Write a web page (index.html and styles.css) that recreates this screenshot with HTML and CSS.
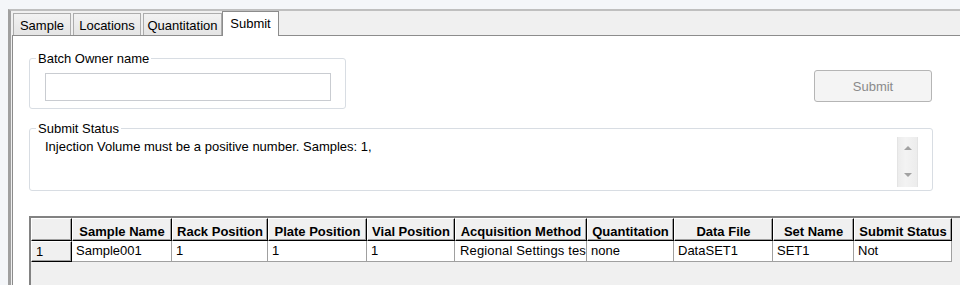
FILE: index.html
```html
<!DOCTYPE html>
<html lang="en">
<head>
    <meta charset="UTF-8">
    <title>Batch Submit</title>
    <link rel="stylesheet" href="styles.css">
</head>
<body>
    <div class="frame">
        <div class="tabs">
            <div class="tab tab-sample">Sample</div>
            <div class="tab tab-locations">Locations</div>
            <div class="tab tab-quant">Quantitation</div>
            <div class="tab tab-submit active">Submit</div>
        </div>

        <div class="panel">
            <div class="top-row">
                <fieldset class="group owner">
                    <legend>Batch Owner name</legend>
                    <input type="text" class="owner-input">
                </fieldset>
                <button class="submit-btn" disabled>Submit</button>
            </div>

            <fieldset class="group status">
                <legend>Submit Status</legend>
                <div class="status-body">
                    <div class="status-text">Injection Volume must be a positive number. Samples: 1,</div>
                    <div class="scrollbar">
                        <span class="arrow up"></span>
                        <span class="arrow down"></span>
                    </div>
                </div>
            </fieldset>

            <div class="grid-wrap">
                <div class="grid">
                    <div class="hcell"></div>
                    <div class="hcell">Sample Name</div>
                    <div class="hcell">Rack Position</div>
                    <div class="hcell">Plate Position</div>
                    <div class="hcell">Vial Position</div>
                    <div class="hcell">Acquisition Method</div>
                    <div class="hcell">Quantitation</div>
                    <div class="hcell">Data File</div>
                    <div class="hcell">Set Name</div>
                    <div class="hcell">Submit Status</div>

                    <div class="rowhead">1</div>
                    <div class="cell">Sample001</div>
                    <div class="cell">1</div>
                    <div class="cell">1</div>
                    <div class="cell">1</div>
                    <div class="cell cell-method">Regional Settings test</div>
                    <div class="cell">none</div>
                    <div class="cell">DataSET1</div>
                    <div class="cell">SET1</div>
                    <div class="cell">Not</div>
                </div>
            </div>
        </div>
    </div>
</body>
</html>
```

FILE: styles.css
```css
* {
    box-sizing: border-box;
    margin: 0;
    padding: 0;
}

body {
    font-family: "Liberation Sans", Arial, sans-serif;
    font-size: 13px;
    line-height: 15px;
    color: #000;
    background-color: #f4f6f9;
    height: 285px;
    overflow: hidden;
}

.frame {
    display: flex;
    flex-direction: column;
    margin: 9px 0 0 8px;
    height: 276px;
    background-color: #f0f0f0;
    border-top: 2px solid #bfbfbf;
    border-left: 3px solid #a0a0a0;
}

/* Tab strip */
.tabs {
    display: flex;
    align-items: flex-end;
    height: 24px;
    padding-left: 2px;
}

.tab {
    height: 22px;
    margin-right: 2px;
    padding-top: 4px;
    text-align: center;
    white-space: nowrap;
    background: linear-gradient(#f2f2f2, #e4e4e4);
    border: 1px solid #acacac;
    border-bottom: none;
}

.tab-sample { width: 58px; }
.tab-locations { width: 68px; }
.tab-quant { width: 79px; }
.tab-submit { width: 57px; }

.tab.active {
    position: relative;
    z-index: 1;
    height: 25px;
    margin-left: -2px;
    margin-bottom: -1px;
    background: #fff;
    border-color: #8c8c8c;
}

/* Page of the active tab */
.panel {
    flex: 1;
    margin-left: 1px;
    padding: 15px 0 0 16px;
    background-color: #fff;
    border-top: 1px solid #8c8c8c;
    border-left: 1px solid #8c8c8c;
    overflow: hidden;
}

.top-row {
    display: flex;
    justify-content: space-between;
    width: 904px;
}

.group {
    border: 1px solid #d8dde3;
    border-radius: 3px;
    min-width: 0;
}

.group legend {
    margin-left: -9px;
    padding: 0 2px;
}

.owner {
    width: 317px;
    padding: 7px 13px 7px 15px;
}

.owner-input {
    display: block;
    width: 286px;
    height: 28px;
    border: 1px solid #c9ccd1;
    background: #fff;
}

.submit-btn {
    width: 118px;
    height: 32px;
    margin: 19px 1px 0 0;
    font-family: inherit;
    font-size: 13px;
    color: #8a8a8a;
    background-color: #f4f4f4;
    border: 1px solid #b5b5b5;
    border-radius: 3px;
}

.status {
    width: 904px;
    margin-top: 12px;
    padding: 1px 14px 3px 15px;
}

.status-body {
    display: flex;
    justify-content: space-between;
}

.status-text {
    margin-top: 2px;
    white-space: nowrap;
}

.scrollbar {
    display: flex;
    flex-direction: column;
    justify-content: space-between;
    align-items: center;
    width: 21px;
    height: 50px;
    padding: 9px 0 10px;
    background: linear-gradient(90deg, #ececec, #f3f3f3 40%, #ececec);
    border-left: 1px solid #e4e4e4;
    border-right: 1px solid #e4e4e4;
}

.arrow {
    width: 0;
    height: 0;
    border-left: 4px solid transparent;
    border-right: 4px solid transparent;
}

.arrow.up {
    border-bottom: 4px solid #a2a2a2;
}

.arrow.down {
    border-top: 4px solid #a2a2a2;
}

/* Sample grid */
.grid-wrap {
    width: 940px;
    height: 80px;
    margin-top: 25px;
    background-color: #f0f0f0;
    border-top: 2px solid #828282;
    border-left: 2px solid #828282;
}

.grid {
    display: grid;
    grid-template-columns: 41px 100px 96px 99px 88px 132px 87px 99px 81px 98px;
    grid-template-rows: 23px 21px;
}

.hcell,
.rowhead {
    background-color: #f0f0f0;
    border: 1px solid;
    border-color: #fff #000 #000 #fff;
    box-shadow: inset -1px -1px #a0a0a0;
    white-space: nowrap;
    overflow: hidden;
}

.hcell {
    padding-top: 5px;
    font-weight: bold;
    text-align: center;
}

.rowhead {
    padding: 2px 0 0 4px;
}

.cell {
    padding: 2px 0 0 4px;
    background-color: #fff;
    border-right: 1px solid #a0a0a0;
    border-bottom: 1px solid #a0a0a0;
    white-space: nowrap;
    overflow: hidden;
}

.cell-method {
    padding-left: 5px;
    letter-spacing: 0.15px;
}
```
